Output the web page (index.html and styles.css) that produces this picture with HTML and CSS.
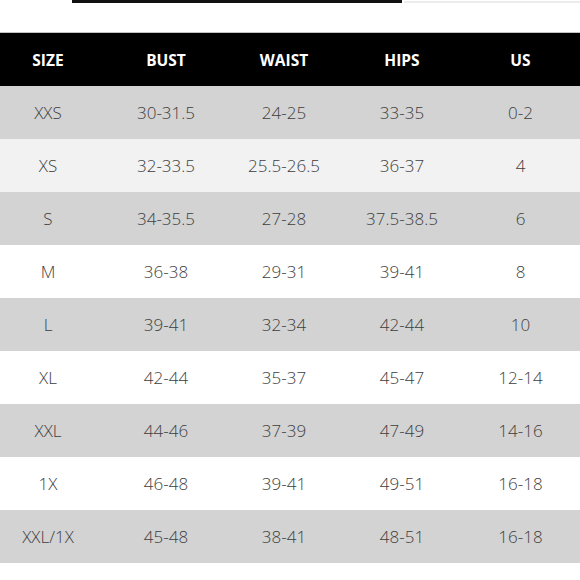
FILE: index.html
```html
<!DOCTYPE html>
<html>
<head>
<meta charset="utf-8">
<link rel="stylesheet" href="styles.css">
</head>
<body>
<div class="topbar">
  <div class="topbar-dark"></div>
  <div class="topbar-light"></div>
</div>
<div class="chart">
  <div class="row head">
    <div>SIZE</div><div>BUST</div><div>WAIST</div><div>HIPS</div><div>US</div>
  </div>
  <div class="row gray"><div>XXS</div><div>30-31.5</div><div>24-25</div><div>33-35</div><div>0-2</div></div>
  <div class="row light"><div>XS</div><div>32-33.5</div><div>25.5-26.5</div><div>36-37</div><div>4</div></div>
  <div class="row gray"><div>S</div><div>34-35.5</div><div>27-28</div><div>37.5-38.5</div><div>6</div></div>
  <div class="row white"><div>M</div><div>36-38</div><div>29-31</div><div>39-41</div><div>8</div></div>
  <div class="row gray"><div>L</div><div>39-41</div><div>32-34</div><div>42-44</div><div>10</div></div>
  <div class="row white"><div>XL</div><div>42-44</div><div>35-37</div><div>45-47</div><div>12-14</div></div>
  <div class="row gray"><div>XXL</div><div>44-46</div><div>37-39</div><div>47-49</div><div>14-16</div></div>
  <div class="row white"><div>1X</div><div>46-48</div><div>39-41</div><div>49-51</div><div>16-18</div></div>
  <div class="row gray"><div>XXL/1X</div><div>45-48</div><div>38-41</div><div>48-51</div><div>16-18</div></div>
</div>
</body>
</html>
```
FILE: styles.css
```css
html, body {
  margin: 0;
  padding: 0;
  background: #ffffff;
  overflow: hidden;
}
body {
  width: 580px;
  height: 580px;
  font-family: "Open Sans", "Liberation Sans", sans-serif;
}
.topbar {
  display: flex;
  align-items: flex-start;
  gap: 2px;
  height: 32px;
  padding-left: 72px;
}
.topbar-dark {
  width: 330px;
  height: 3px;
  background: #111111;
}
.topbar-light {
  flex: 1;
  height: 2px;
  margin-top: 1px;
  background: #ececec;
}
.chart {
  width: 591px;
  margin-left: -11px;
}
.row {
  display: grid;
  grid-template-columns: 118px 118px 118px 118px 119px;
  height: 53px;
  font-size: 17px;
  font-weight: 300;
  color: #3e3e3e;
}
.row > div {
  display: flex;
  align-items: center;
  justify-content: center;
}
.row.head {
  border-top: 1px solid #c4c4c4;
  background: #000000;
  color: #ffffff;
  font-weight: 700;
  font-size: 15.5px;
}
.row.gray { background: #d3d3d3; }
.row.light { background: #f2f2f2; }
.row.white { background: #ffffff; }
```
